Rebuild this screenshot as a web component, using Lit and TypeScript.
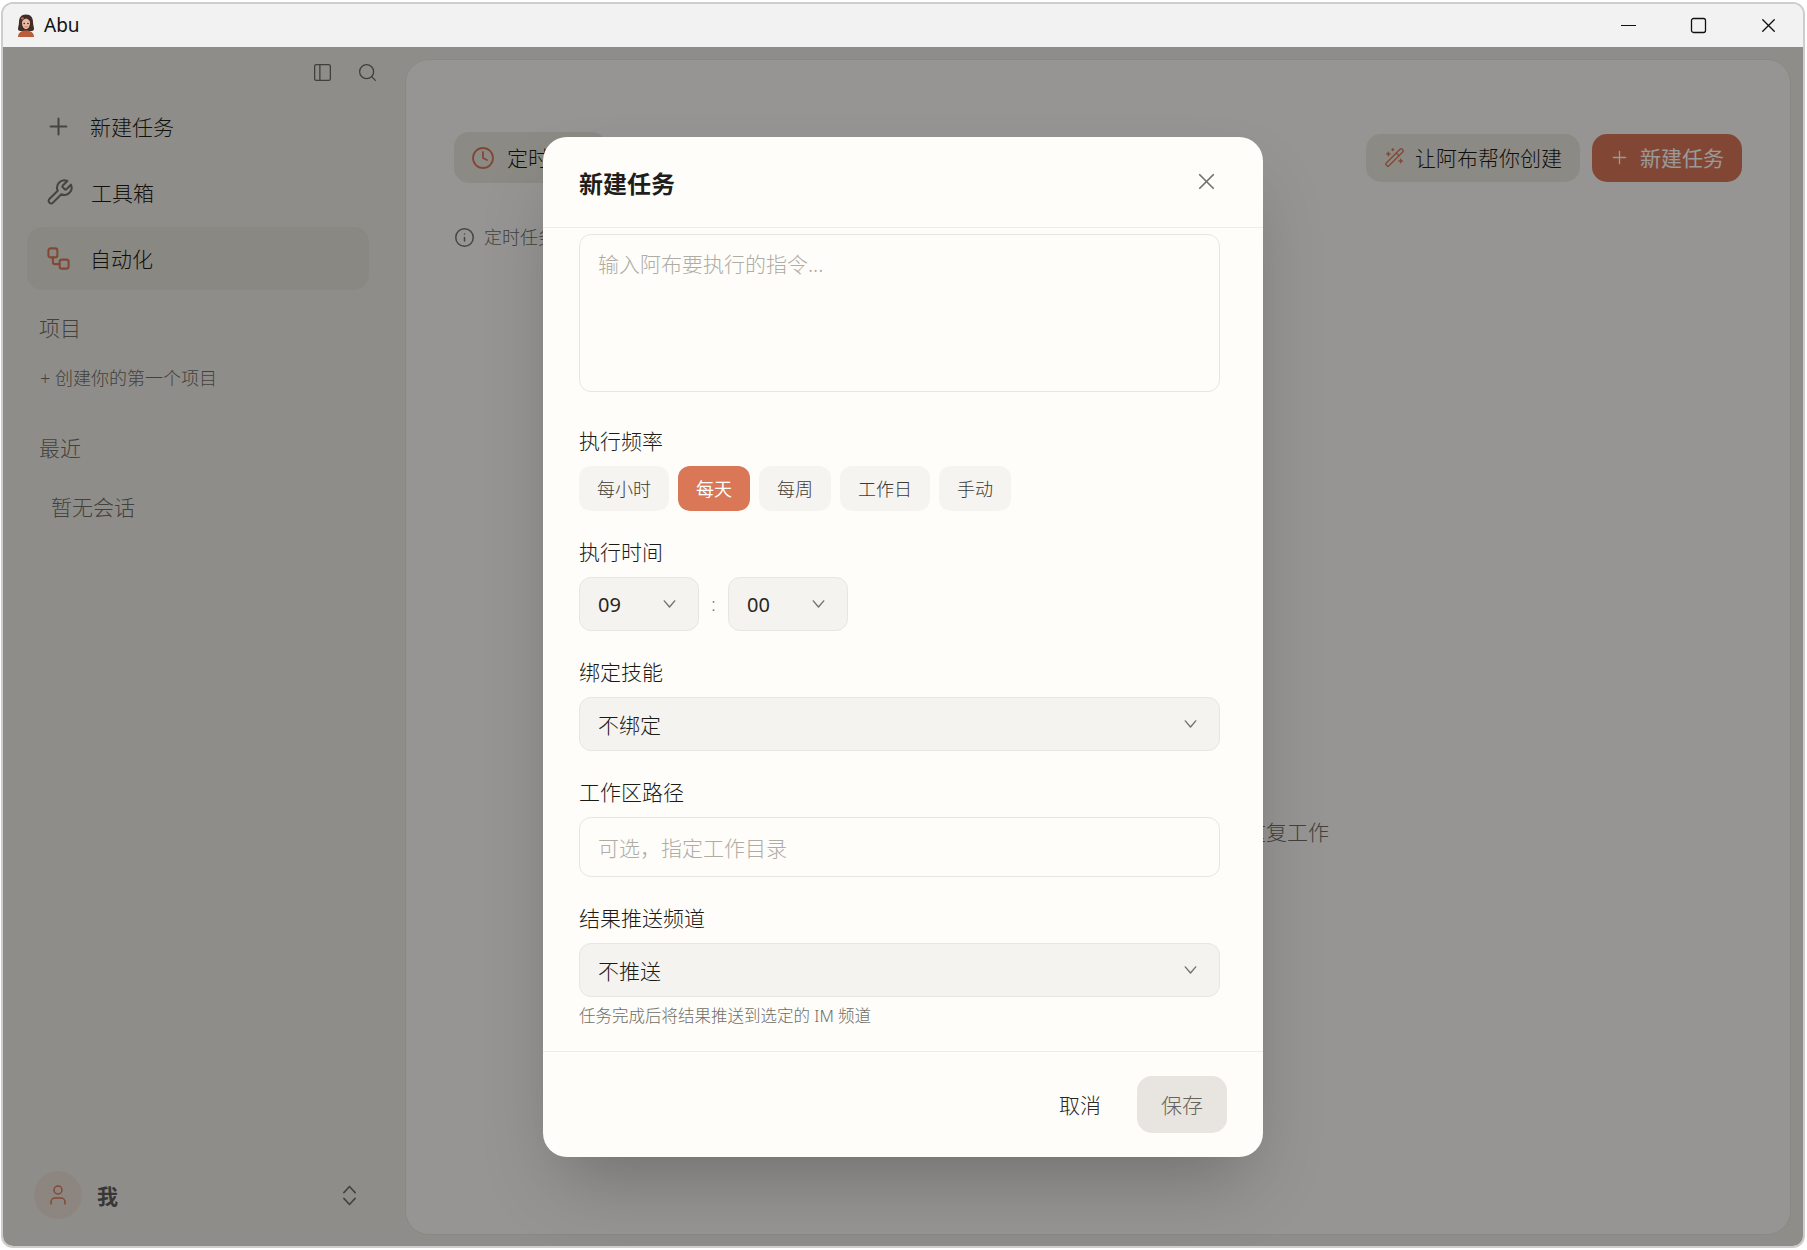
import { LitElement, html, css, svg } from 'lit';
import { customElement, state } from 'lit/decorators.js';

const icon = (size: number, body: unknown, sw = 2) => html`<svg
  width=${size} height=${size} viewBox="0 0 24 24" fill="none" stroke="currentColor"
  stroke-width=${sw} stroke-linecap="round" stroke-linejoin="round">${body}</svg>`;

const I = {
  plus: svg`<path d="M5 12h14"/><path d="M12 5v14"/>`,
  wrench: svg`<path d="M14.7 6.3a1 1 0 0 0 0 1.4l1.6 1.6a1 1 0 0 0 1.4 0l3.77-3.77a6 6 0 0 1-7.94 7.94l-6.91 6.91a2.12 2.12 0 0 1-3-3l6.91-6.91a6 6 0 0 1 7.94-7.94l-3.76 3.76z"/>`,
  workflow: svg`<rect x="3" y="3" width="8" height="8" rx="2"/><path d="M7 11v4a2 2 0 0 0 2 2h4"/><rect x="13" y="13" width="8" height="8" rx="2"/>`,
  panel: svg`<rect x="3" y="3" width="18" height="18" rx="2"/><path d="M9 3v18"/>`,
  search: svg`<circle cx="11" cy="11" r="8"/><path d="m21 21-4.3-4.3"/>`,
  clock: svg`<circle cx="12" cy="12" r="10"/><path d="M12 6v6l4 2"/>`,
  info: svg`<circle cx="12" cy="12" r="10"/><path d="M12 16v-4"/><path d="M12 8h.01"/>`,
  wand: svg`<path d="m21.64 3.64-1.28-1.28a1.21 1.21 0 0 0-1.72 0L2.36 18.64a1.21 1.21 0 0 0 0 1.72l1.28 1.28a1.2 1.2 0 0 0 1.72 0L21.64 5.36a1.2 1.2 0 0 0 0-1.72"/><path d="m14 7 3 3"/><path d="M5 6v4"/><path d="M19 14v4"/><path d="M10 2v2"/><path d="M7 8H3"/><path d="M21 16h-4"/><path d="M11 3H9"/>`,
  x: svg`<path d="M18 6 6 18"/><path d="m6 6 12 12"/>`,
  down: svg`<path d="m6 9 6 7 6-7"/>`,
  updown: svg`<path d="m7 14.500 5 5.500 5-5.500"/><path d="m7 9.500 5-5.500 5 5.500"/>`,
  user: svg`<path d="M19 21v-2a4 4 0 0 0-4-4H9a4 4 0 0 0-4 4v2"/><circle cx="12" cy="7" r="4"/>`,
};

// small picture of the Abu mascot used in the title bar
const mascot = html`<svg class="mascot" width="18" height="23" viewBox="0 0 18 23">
  <path d="M9 .5C4 .5 2 4 2 8c0 3-1 5-1 7 0 1.500 1.500 2 3 2h10c1.500 0 3-.5 3-2 0-2-1-4-1-7 0-4-2-7.500-7-7.500z" fill="#3f2d27"/>
  <path d="M5 8.500c0-2 2-3.500 4-4 2 .5 4 2 4 4 0 4-1.700 6.500-4 6.500s-4-2.500-4-6.500z" fill="#eab7a0"/>
  <path d="M3 6c1-2.500 3-4 6-4 1 2-2 4-6 4z" fill="#3f2d27"/>
  <circle cx="5.500" cy="4.500" r="1.300" fill="#e0604a"/>
  <circle cx="7.200" cy="9.500" r=".8" fill="#2c1e1a"/><circle cx="11" cy="9.500" r=".8" fill="#2c1e1a"/>
  <path d="M7.700 12.500c.8 .6 2 .6 2.800 0" stroke="#b0503f" stroke-width=".7" fill="none"/>
  <path d="M1 23c0-4 3-6.500 8-6.500s8 2.500 8 6.500z" fill="#bb5c3a"/>
</svg>`;

@customElement('app-root')
export class AppRoot extends LitElement {
  static styles = css`
    :host {
      display: block;
      width: 100vw;
      height: 100vh;
      background: #fff;
      font-family: "Noto Sans", "Noto Sans CJK SC", sans-serif;
      font-weight: 300;
      color: #1c1a15;
    }
    * { box-sizing: border-box; }
    svg { display: block; flex: none; }
    .t { display: block; padding-bottom: 2px; }

    .window {
      position: relative;
      height: 1246px;
      margin: 2px 2px 0 1px;
      border: 2px solid #cdcdcd;
      border-radius: 12px;
      overflow: hidden;
      display: flex;
      flex-direction: column;
    }

    .titlebar {
      height: 43px;
      flex: none;
      background: #f2f2f2;
      display: flex;
      align-items: center;
      padding-left: 14px;
      color: #111;
    }
    .titlebar .name { margin-left: 9px; font-size: 19px; font-weight: 400; flex: 1; line-height: 24px; padding-bottom: 2px; }
    .win-btn { width: 70px; height: 43px; display: flex; align-items: center; justify-content: center; }
    .win-min { width: 15px; height: 1px; background: #111; }

    .body { flex: 1; min-height: 0; position: relative; display: flex; background: #efece4; }

    .sidebar {
      width: 402px;
      flex: none;
      padding: 0 36px 27px 24px;
      display: flex;
      flex-direction: column;
    }
    .tools {
      height: 48px;
      flex: none;
      display: flex;
      justify-content: flex-end;
      align-items: center;
      gap: 24px;
      padding-top: 2px;
      margin-right: -9px;
      color: #6b6a64;
    }
    .nav { display: flex; flex-direction: column; gap: 3px; }
    .nav-item {
      height: 63px;
      border-radius: 15px;
      display: flex;
      align-items: center;
      gap: 18px;
      padding-left: 18px;
      font-size: 21px;
      color: #1f1c15;
    }
    .nav-item svg { color: #73726c; }
    .nav-item svg.wrench-slot { margin-left: -1px; }
    .nav-item .after-wrench { margin-left: -1px; }
    .nav-item.on { background: #e6e3da; }
    .nav-item.on svg { color: #d97757; }
    .section { font-size: 21px; line-height: 30px; color: #6e6d66; padding-left: 12px; }
    .section.projects { margin-top: 23px; }
    .section.recent { margin-top: 41px; }
    .create { margin-top: 22px; font-size: 18px; line-height: 27px; color: #6e6d66; padding-left: 13px; }
    .empty { margin-top: 29px; font-size: 21px; line-height: 30px; color: #6e6d66; padding-left: 24px; }
    .me { margin-top: auto; display: flex; align-items: center; padding: 0 6px 0 7px; }
    .avatar {
      width: 48px;
      height: 48px;
      border-radius: 50%;
      background: rgba(217, 119, 87, .1);
      color: #d97757;
      display: flex;
      align-items: center;
      justify-content: center;
    }
    .me .who { margin-left: 15px; flex: 1; font-size: 21px; font-weight: 700; color: #5e5d59; }
    .me svg.arrows { color: #73726c; }

    .main {
      flex: 1;
      margin: 12px 12px 11px 0;
      border-radius: 24px;
      border: 1px solid #e6e3da;
      background: #fbf9f5;
      padding: 72px 48px 0 48px;
      display: flex;
      flex-direction: column;
      min-width: 0;
    }
    .main-head { display: flex; align-items: center; justify-content: space-between; height: 51px; flex: none; }
    .tab {
      height: 51px;
      border-radius: 15px;
      background: #e9e6de;
      display: flex;
      align-items: center;
      gap: 12px;
      padding: 0 16px 0 17px;
      font-size: 21px;
      color: #1c1a15;
    }
    .tab svg, .ask svg { color: #d97757; }
    .actions { display: flex; gap: 12px; }
    .ask, .add {
      height: 48px;
      border-radius: 15px;
      display: flex;
      align-items: center;
      font-size: 21px;
    }
    .ask { background: #e9e6de; padding: 0 18px; gap: 10px; color: #1c1a15; }
    .add { background: #d97757; color: #fff; padding: 0 18px 0 17px; gap: 10px; font-weight: 400; }
    .tip { margin-top: 41px; display: flex; align-items: center; gap: 9px; font-size: 18px; line-height: 27px; color: #6e6d66; }
    .tip svg { color: #73726c; }
    .blank {
      flex: 1;
      display: flex;
      flex-direction: column;
      align-items: center;
      justify-content: center;
      color: #6e6d66;
    }
    .blank .art { height: 178px; }
    .blank .copy { font-size: 21px; line-height: 30px; }

    .overlay {
      position: absolute;
      inset: 0;
      background: rgba(0, 0, 0, .4);
      display: flex;
      align-items: center;
      justify-content: center;
    }
    .modal {
      width: 720px;
      height: 1020px;
      border-radius: 24px;
      background: #fefdfa;
      box-shadow: 0 37px 75px -18px rgba(0, 0, 0, .25);
      display: flex;
      flex-direction: column;
      overflow: hidden;
    }
    .modal-head {
      height: 91px;
      flex: none;
      padding: 0 36px;
      border-bottom: 1px solid #eeece7;
      display: flex;
      align-items: center;
      justify-content: space-between;
    }
    .modal-head h2 { margin: 0; padding-top: 2px; font-size: 24px; font-weight: 700; color: #1f1e1b; }
    .close { width: 42px; height: 42px; display: flex; align-items: center; justify-content: center; color: #73726c; }

    .modal-body {
      flex: 1;
      min-height: 0;
      padding: 6px 43px 0 36px;
      display: flex;
      flex-direction: column;
      gap: 27px;
      overflow: hidden;
    }
    .field { display: flex; flex-direction: column; }
    .field label { font-size: 21px; line-height: 28px; margin-bottom: 11px; color: #1c1a15; }
    textarea, input {
      display: block;
      width: 100%;
      border: 1px solid #e8e6e1;
      border-radius: 12px;
      background: transparent;
      font: inherit;
      font-size: 21px;
      color: #1c1a15;
      padding: 0 18px;
      outline: none;
      resize: none;
    }
    textarea { height: 158px; padding-top: 13px; line-height: 32px; margin-bottom: 8px; }
    input { height: 60px; padding-top: 2px; }
    ::placeholder { color: #aeaca4; opacity: 1; }

    .chips { display: flex; gap: 9px; }
    .chip {
      height: 45px;
      padding: 0 18px 1px;
      border-radius: 12px;
      background: #f5f4f0;
      color: #3d3a33;
      font-size: 18px;
      display: flex;
      align-items: center;
    }
    .chip.on { background: #d97757; color: #fff; font-weight: 400; }

    .select {
      height: 54px;
      border: 1px solid #e8e6e1;
      border-radius: 12px;
      background: #f4f3ef;
      display: flex;
      align-items: center;
      justify-content: space-between;
      padding: 0 18px 0 18px;
      font-size: 21px;
      color: #1c1a15;
    }
    .select svg { color: #73726c; }
    .select .num { padding-top: 2px; font-size: 20px; font-weight: 400; color: #29261f; }
    .time { display: flex; align-items: center; }
    .time .select { width: 120px; }
    .time .colon { width: 29px; text-align: center; color: #6e6d66; font-size: 18px; }
    .hint { margin-top: 6px; font-size: 16.5px; line-height: 25px; color: #6e6d66; }

    .modal-foot {
      height: 106px;
      flex: none;
      border-top: 1px solid #eeece7;
      padding: 24px 36px 0;
      display: flex;
      justify-content: flex-end;
      gap: 12px;
    }
    .btn {
      width: 90px;
      height: 57px;
      border-radius: 15px;
      display: flex;
      align-items: center;
      justify-content: center;
      font-size: 21px;
      color: #29261f;
    }
    .btn.save { background: #e8e4df; color: #66645d; }
  `;

  @state() freq = '每天';

  private select(value: string, num = false) {
    return html`<div class="select"><span class=${num ? 'num' : ''}>${value}</span>${icon(21, I.down, 1.6)}</div>`;
  }

  render() {
    const freqs = ['每小时', '每天', '每周', '工作日', '手动'];
    return html`
      <div class="window">
        <div class="titlebar">
          ${mascot}
          <span class="name">Abu</span>
          <div class="win-btn"><div class="win-min"></div></div>
          <div class="win-btn">
            <svg width="17" height="17" viewBox="0 0 17 17" fill="none" stroke="#111" stroke-width="1.3"><rect x="1.500" y="1.500" width="14" height="14" rx="2"/></svg>
          </div>
          <div class="win-btn">${icon(23, I.x, 1.4)}</div>
        </div>
        <div class="body">
          <aside class="sidebar">
            <div class="tools">${icon(21, I.panel, 1.5)}${icon(21, I.search, 1.5)}</div>
            <nav class="nav">
              <div class="nav-item">${icon(27, I.plus, 1.8)}<span class="t">新建任务</span></div>
              <div class="nav-item">${icon(29, I.wrench, 1.7)}<span class="t after-wrench">工具箱</span></div>
              <div class="nav-item on">${icon(27, I.workflow, 1.8)}<span class="t">自动化</span></div>
            </nav>
            <div class="section projects">项目</div>
            <div class="create">+ 创建你的第一个项目</div>
            <div class="section recent">最近</div>
            <div class="empty">暂无会话</div>
            <div class="me">
              <div class="avatar">${icon(24, I.user, 1.5)}</div>
              <span class="who">我</span>
              <svg class="arrows" width="27" height="27" viewBox="0 0 24 24" fill="none" stroke="currentColor" stroke-width="1.5" stroke-linecap="round" stroke-linejoin="round">${I.updown}</svg>
            </div>
          </aside>
          <main class="main">
            <div class="main-head">
              <div class="tab">${icon(24, I.clock, 1.8)}<span class="t">定时任务</span></div>
              <div class="actions">
                <div class="ask">${icon(21, I.wand, 1.5)}<span class="t">让阿布帮你创建</span></div>
                <div class="add">${icon(21, I.plus, 1.5)}<span class="t">新建任务</span></div>
              </div>
            </div>
            <div class="tip">${icon(21, I.info, 1.7)}定时任务将在设定的时间自动运行</div>
            <div class="blank">
              <div class="art"></div>
              <div class="copy">添加定时任务，让阿布定时自动帮你完成重复工作</div>
            </div>
          </main>

          <div class="overlay">
            <div class="modal">
              <div class="modal-head">
                <h2>新建任务</h2>
                <div class="close">${icon(27, I.x, 1.5)}</div>
              </div>
              <div class="modal-body">
                <textarea placeholder="输入阿布要执行的指令..."></textarea>
                <div class="field">
                  <label>执行频率</label>
                  <div class="chips">
                    ${freqs.map((f) => html`<div class="chip ${f === this.freq ? 'on' : ''}">${f}</div>`)}
                  </div>
                </div>
                <div class="field">
                  <label>执行时间</label>
                  <div class="time">
                    ${this.select('09', true)}<span class="colon">:</span>${this.select('00', true)}
                  </div>
                </div>
                <div class="field">
                  <label>绑定技能</label>
                  ${this.select('不绑定')}
                </div>
                <div class="field">
                  <label>工作区路径</label>
                  <input placeholder="可选，指定工作目录" />
                </div>
                <div class="field">
                  <label>结果推送频道</label>
                  ${this.select('不推送')}
                  <div class="hint">任务完成后将结果推送到选定的 IM 频道</div>
                </div>
              </div>
              <div class="modal-foot">
                <div class="btn">取消</div>
                <div class="btn save">保存</div>
              </div>
            </div>
          </div>
        </div>
      </div>
    `;
  }
}
